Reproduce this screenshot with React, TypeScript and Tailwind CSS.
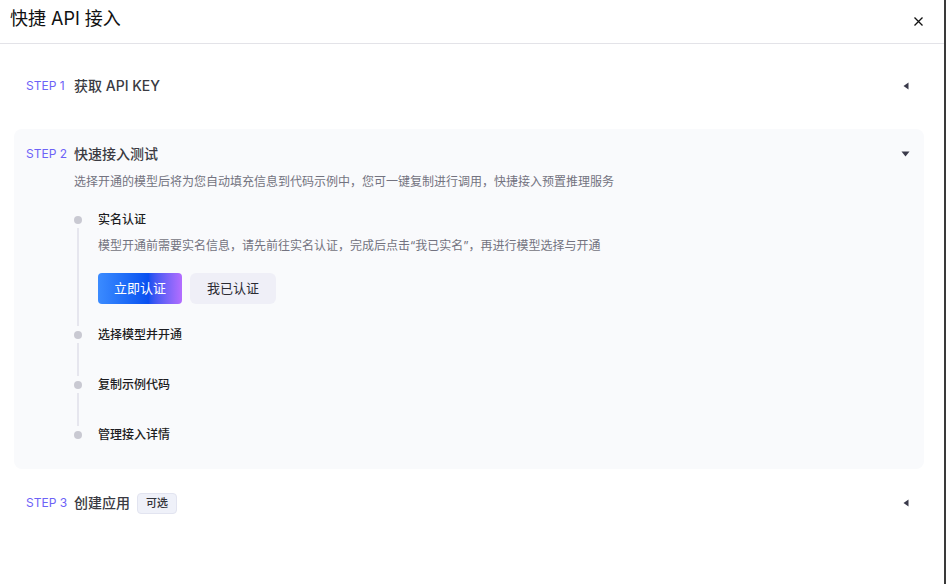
import React from 'react';

const font = { fontFamily: 'Inter, "Noto Sans CJK SC", sans-serif' };

function CaretLeft() {
  return (
    <svg width="6" height="8" viewBox="0 0 6 8" className="text-[#3a3a4a]">
      <path d="M5.5 0.5 L0.5 4 L5.5 7.5 Z" fill="currentColor" />
    </svg>
  );
}

function CaretDown() {
  return (
    <svg width="9" height="6" viewBox="0 0 9 6" className="text-[#3a3a4a]">
      <path d="M0.5 0.5 L8.5 0.5 L4.5 5.5 Z" fill="currentColor" />
    </svg>
  );
}

function StepHeader({ step, title, open, tag }: { step: number; title: string; open?: boolean; tag?: string }) {
  return (
    <div className="flex items-center h-[18px]">
      <span className="w-[48px] text-[12px] leading-[18px] text-[#6d62f7]">STEP {step}</span>
      <span className="text-[14px] leading-[18px] text-[#3a3a42] font-medium">{title}</span>
      {tag && (
        <span className="ml-[7px] h-[21px] px-[8px] flex items-center rounded-[4px] border border-[#e2e4f0] bg-[#eff1f9] text-[11px] text-[#333339] font-medium">
          {tag}
        </span>
      )}
      <span className={`ml-auto flex items-center ${open ? 'mr-[2px]' : 'mr-[3px]'}`}>
        {open ? <CaretDown /> : <CaretLeft />}
      </span>
    </div>
  );
}

interface Item {
  title: string;
  body?: React.ReactNode;
  pb: string;
  last?: boolean;
}

function TimelineItem({ title, body, pb, last }: Item) {
  return (
    <div className="flex">
      <div className="w-[8px] flex flex-col items-center">
        <div className="mt-[5px] w-[8px] h-[8px] rounded-full bg-[#c9c9d2]" />
        {!last && <div className="mt-[4px] w-[2px] flex-1 bg-[#e6e6ee]" />}
      </div>
      <div className={`ml-[16px] ${pb}`}>
        <div className="text-[12px] leading-[18px] font-medium text-[#1d1d22]">{title}</div>
        {body}
      </div>
    </div>
  );
}

export default function App() {
  return (
    <div className="w-[946px] h-[584px] flex bg-white overflow-hidden" style={font}>
      <div className="flex-1 flex flex-col">
        <div className="h-[44px] flex items-center pl-[10px] pr-[10px] border-b border-[#e3e3e8]">
          <h1 className="text-[18px] leading-[24px] text-[#111] pb-[5px]">快捷 API 接入</h1>
          <button className="ml-auto mr-[8px] flex items-center justify-center w-[16px] h-[16px]">
            <svg width="9" height="9" viewBox="0 0 9 9">
              <path d="M0.5 0.5 L8.5 8.5 M8.5 0.5 L0.5 8.5" stroke="#111" strokeWidth="1.3" />
            </svg>
          </button>
        </div>

        <div className="pl-[14px] pr-[20px]">
          <section className="mt-[17px] px-[12px] py-[16px]">
            <StepHeader step={1} title="获取 API KEY" />
          </section>

          <section className="mt-[18px] rounded-[8px] bg-[#f9fafc] px-[12px] pt-[16px] pb-[25px]">
            <StepHeader step={2} title="快速接入测试" open />
            <p className="mt-[10px] ml-[48px] text-[12px] leading-[18px] text-[#737380]">
              选择开通的模型后将为您自动填充信息到代码示例中，您可一键复制进行调用，快捷接入预置推理服务
            </p>
            <div className="mt-[20px] ml-[48px]">
              <TimelineItem
                title="实名认证"
                pb="pb-[22px]"
                body={
                  <>
                    <p className="mt-[8px] text-[12px] leading-[18px] text-[#737380]">
                      模型开通前需要实名信息，请先前往实名认证，完成后点击“我已实名”，再进行模型选择与开通
                    </p>
                    <div className="mt-[18px] flex gap-[8px]">
                      <button className="h-[31px] w-[84px] rounded-[4px] text-[13px] text-white bg-linear-to-r from-[#3b8bff] via-[#0a4ff0] via-60% to-[#b46dff]">
                        立即认证
                      </button>
                      <button className="h-[31px] w-[86px] rounded-[6px] text-[13px] text-[#2b2b33] bg-[#efeff7]">
                        我已认证
                      </button>
                    </div>
                  </>
                }
              />
              <TimelineItem title="选择模型并开通" pb="pb-[32px]" />
              <TimelineItem title="复制示例代码" pb="pb-[32px]" />
              <TimelineItem title="管理接入详情" pb="" last />
            </div>
          </section>

          <section className="mt-[9px] px-[12px] py-[16px]">
            <StepHeader step={3} title="创建应用" tag="可选" />
          </section>
        </div>
      </div>
      <div className="w-[2px] bg-[#3a3a3a]" />
    </div>
  );
}
